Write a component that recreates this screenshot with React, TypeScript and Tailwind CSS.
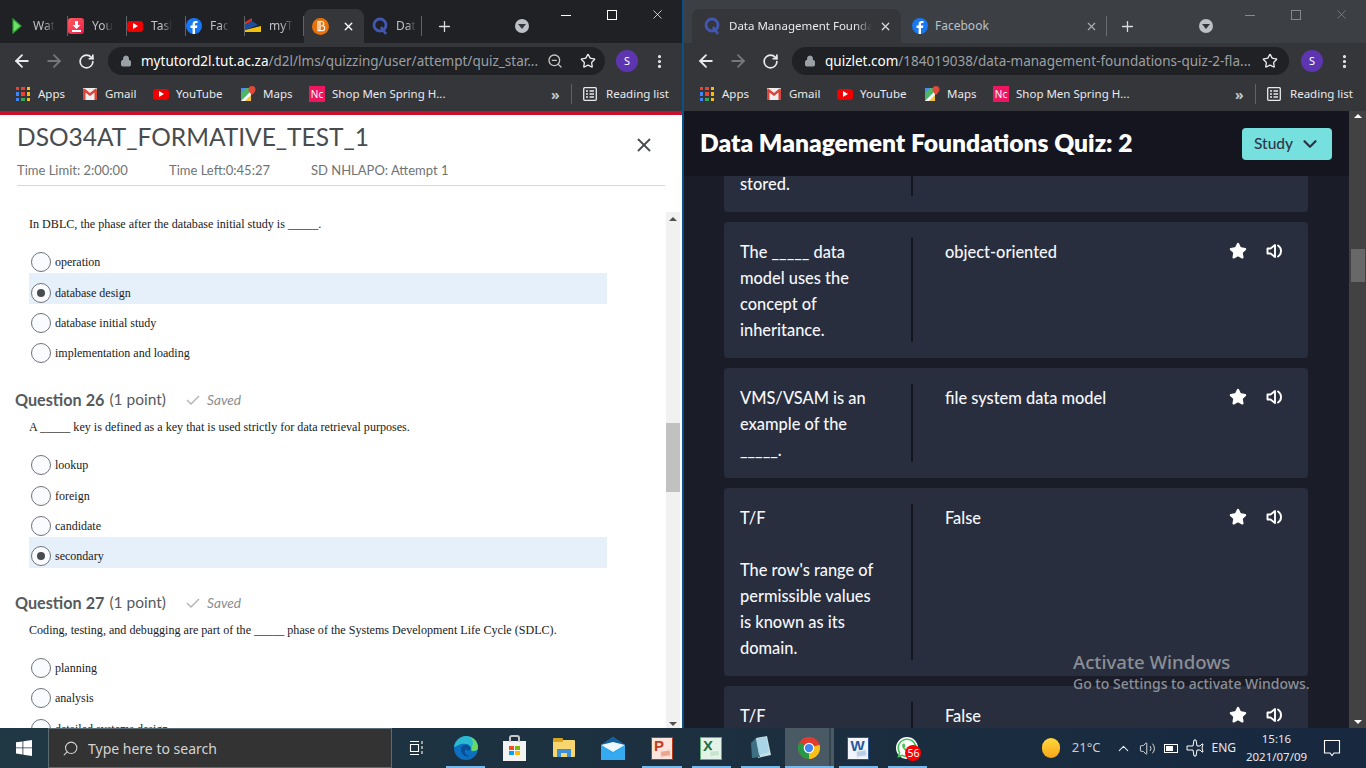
import { ArrowLeft, ArrowRight, ChevronDown, ChevronUp, Lock, MoreVertical, Plus, RotateCw, Search, Star, Volume2, X, ZoomOut } from 'lucide-react'
import { FaWhatsapp } from 'react-icons/fa'
import type { ReactNode } from 'react'

const ui = 'font-["Noto_Sans",sans-serif]'
const lato = 'font-["Lato",sans-serif]'
const fade = '[mask-image:linear-gradient(to_right,black_55%,transparent)]'

function Quizlet() {
  return (
    <svg width="16" height="18" viewBox="0 0 16 18" fill="none" stroke="#4257b2" strokeWidth="2.800">
      <circle cx="8" cy="8" r="6" />
      <path d="M9 10l5 7" />
    </svg>
  )
}

function Fb() {
  return (
    <svg width="16" height="16" viewBox="0 0 16 16">
      <circle cx="8" cy="8" r="8" fill="#1877f2" />
      <path d="M9 16V10h2l.4-2.4H9V6.2c0-.7.3-1.2 1.3-1.2h1.2V3c-.6-.1-1.2-.1-1.8-.1C7.800 2.900 6.600 4 6.600 6v1.600H4.500V10h2.100v6z" fill="#fff" />
    </svg>
  )
}

function Yt() {
  return (
    <span className="flex h-[11px] w-[16px] items-center justify-center rounded-[3px] bg-[#f00000]">
      <span className="h-0 w-0 border-y-[3px] border-l-[5px] border-y-transparent border-l-white" />
    </span>
  )
}

function AppsIcon() {
  const colors = ['#ea4335', '#ea4335', '#fbbc05', '#4285f4', '#ea4335', '#fbbc05', '#4285f4', '#34a853', '#fbbc05']
  return (
    <span className="grid h-[14px] w-[14px] grid-cols-3 gap-[2px]">
      {colors.map((c, i) => <span key={i} style={{ background: c }} />)}
    </span>
  )
}

function GmailIcon() {
  return (
    <svg width="14" height="12" viewBox="0 0 14 12">
      <rect width="14" height="12" rx="1" fill="#eee" />
      <path d="M0 1.500V12h2.500V4.500L7 8l4.500-3.500V12H14V1.500L12.500.5 7 5 1.500.5z" fill="#d9453a" />
    </svg>
  )
}

function MapsIcon() {
  return (
    <svg width="16" height="16" viewBox="0 0 16 16">
      <path d="M1 2h10v13H1z" fill="#4db56a" />
      <path d="M1 15 11 5v10z" fill="#f7f7f7" />
      <path d="M5 15l6-6v6z" fill="#f5c33b" />
      <path d="M1 2h5L1 7z" fill="#4a8af4" />
      <path d="M12 0a3.500 3.500 0 0 0-3.500 3.500C8.500 6 12 9 12 9s3.500-3 3.500-5.500A3.500 3.500 0 0 0 12 0z" fill="#e2493a" />
    </svg>
  )
}

function NcIcon() {
  return <span className={`${ui} flex h-[16px] w-[16px] items-center justify-center bg-[#f01560] text-[10px] leading-none text-white`}>Nc</span>
}

function ReadingIcon() {
  return (
    <svg width="14" height="14" viewBox="0 0 14 14" fill="none" stroke="#e8eaed" strokeWidth="1.300">
      <rect x=".7" y=".7" width="12.600" height="12.600" rx="1" />
      <path d="M3 4h2M3 7h2M3 10h2M6.500 4h4.500M6.500 7h4.500M6.500 10h4.500" />
    </svg>
  )
}

function Bookmark({ icon, label, className }: { icon: ReactNode; label: string; className: string }) {
  return (
    <span className={`flex items-center ${className}`}>
      <span className="flex w-[16px] items-center justify-center">{icon}</span>
      <span className="ml-[7px]">{label}</span>
    </span>
  )
}

function BookmarkBar() {
  return (
    <div className={`${ui} flex h-[32px] items-center bg-[#35363a] pb-[2px] pl-[15px] text-[11.500px] text-[#e8eaed]`}>
      <Bookmark icon={<AppsIcon />} label="Apps" className="w-[67px]" />
      <Bookmark icon={<GmailIcon />} label="Gmail" className="w-[71px]" />
      <Bookmark icon={<Yt />} label="YouTube" className="w-[87px]" />
      <Bookmark icon={<MapsIcon />} label="Maps" className="w-[69px]" />
      <Bookmark icon={<NcIcon />} label="Shop Men Spring H..." className="w-[242px]" />
      <span className="flex h-[20px] w-[20px] items-center text-[14px] font-bold text-[#c4c7c5]">»</span>
      <span className="h-[20px] w-px bg-[#5f6368]" />
      <span className="ml-[11px] flex items-center gap-[9px]"><ReadingIcon />Reading list</span>
    </div>
  )
}

function Toolbar({ host, path, zoom, pad, urlWidth }: { host: string; path: string; zoom?: boolean; pad: string; urlWidth: string }) {
  return (
    <div className="flex h-[36px] items-center bg-[#35363a] pl-[12px] text-[#e8eaed]">
      <ArrowLeft size={20} strokeWidth={2.200} />
      <ArrowRight size={20} strokeWidth={2.200} className="ml-[12px] text-[#75777a]" />
      <RotateCw size={17} strokeWidth={2.400} className="ml-[14px]" />
      <div className="ml-[13px] flex h-[28px] w-[497px] items-center rounded-full bg-[#202124] pl-[12px]">
        <Lock size={12} className="fill-[#9aa0a6] text-[#9aa0a6]" />
        <span className={`${ui} ml-[9px] whitespace-nowrap text-[13.500px] text-[#9aa0a6] ${urlWidth}`}>
          <span className="text-white">{host}</span>{path}
        </span>
        {zoom && <ZoomOut size={16} className="ml-[14px] text-[#c4c7c5]" />}
        <Star size={16} strokeWidth={2} className="ml-[17px]" />
      </div>
      <span className={`${pad} ${ui} flex h-[22px] w-[22px] shrink-0 items-center justify-center rounded-full bg-[#5e35b1] text-[11px] text-white`}>S</span>
      <MoreVertical size={17} strokeWidth={2.500} className="ml-[13px] shrink-0" />
    </div>
  )
}

function ChromeDrop() {
  return (
    <span className="flex h-[14px] w-[14px] items-center justify-center rounded-full bg-[#bdc1c6]">
      <span className="mt-px h-0 w-0 border-x-[4px] border-t-[5px] border-x-transparent border-t-[#35363a]" />
    </span>
  )
}

function WinControls({ className, dim }: { className: string; dim?: boolean }) {
  const tone = dim ? 'text-[#85888c]' : 'text-white'
  return (
    <div className={`flex h-full items-start ${tone} ${className}`}>
      <span className="mt-[15px] h-px w-[10px] bg-current" />
      <span className="ml-[36px] mt-[10px] h-[10px] w-[10px] border border-current" />
      <X size={15} strokeWidth={1.200} className="ml-[33px] mt-[7px]" />
    </div>
  )
}

const leftTabs: { icon: ReactNode; label: string }[] = [
  {
    icon: (
      <svg width="10" height="16" viewBox="0 0 10 16">
        <path d="M1 1l8 7-8 7z" fill="#6fe06a" stroke="#2aa52f" strokeWidth="1.200" />
      </svg>
    ),
    label: 'Wat',
  },
  {
    icon: (
      <span className="flex h-[16px] w-[16px] items-center justify-center rounded-[3px] bg-gradient-to-br from-[#ff5a5f] to-[#e8124c]">
        <svg width="9" height="11" viewBox="0 0 9 11" fill="#fff">
          <path d="M3 0h3v4h2.500L4.500 8 .5 4H3zM0 9h9v2H0z" />
        </svg>
      </span>
    ),
    label: 'You',
  },
  { icon: <Yt />, label: 'Tasl' },
  { icon: <Fb />, label: 'Fac' },
  {
    icon: (
      <svg width="16" height="16" viewBox="0 0 16 16">
        <path d="M0 12 16 8v6H0z" fill="#f4c20d" />
        <path d="M0 4 7 0v3L0 7z" fill="#d93025" />
        <path d="M0 7l7-4 6 4-13 5z" fill="#1a4e9e" />
      </svg>
    ),
    label: 'myT',
  },
]

function LeftTabStrip() {
  return (
    <div className={`${ui} flex h-[43px] items-end bg-[#202124] pl-[9px] text-[12px] text-[#bdc1c6]`}>
      {leftTabs.map((t) => (
        <div key={t.label} className="flex h-[34px] w-[59px] items-center">
          <span className="flex w-[16px] items-center justify-center">{t.icon}</span>
          <span className={`ml-[8px] whitespace-nowrap ${fade}`}>{t.label}</span>
          <span className="ml-auto h-[20px] w-px bg-[#5f6368]" />
        </div>
      ))}
      <div className="flex h-[34px] w-[60px] items-center rounded-t-[8px] bg-[#35363a] pl-[8px]">
        <svg width="17" height="17" viewBox="0 0 17 17" fill="none">
          <circle cx="8.500" cy="8.500" r="8.500" fill="#e8710a" />
          <path d="M6 3.500h3.500a2.200 2.200 0 0 1 1 4.200 2.500 2.500 0 0 1-.7 5H6zM8 3.500v9.500" stroke="#fff" strokeWidth="1.200" />
        </svg>
        <X size={13} strokeWidth={2.500} className="ml-[13px] text-white" />
      </div>
      <div className="flex h-[34px] w-[58px] items-center pl-[8px]">
        <span className="flex w-[16px] justify-center"><Quizlet /></span>
        <span className={`ml-[8px] ${fade}`}>Dat</span>
        <span className="ml-auto h-[20px] w-px bg-[#5f6368]" />
      </div>
      <div className="flex h-[34px] items-center">
        <Plus size={17} strokeWidth={1.800} className="ml-[14px] text-[#dadce0]" />
        <span className="ml-[62px]"><ChromeDrop /></span>
      </div>
      <WinControls className="ml-[32px]" />
    </div>
  )
}

function RightTabStrip() {
  return (
    <div className={`${ui} flex h-[43px] items-end bg-[#3c3f43] pl-[8px] text-[12px] text-[#bdc1c6]`}>
      <div className="flex h-[34px] w-[209px] items-center rounded-t-[8px] bg-[#35363a] pl-[12px] text-[#e8eaed]">
        <span className="flex w-[16px] justify-center"><Quizlet /></span>
        <span className="ml-[9px] w-[143px] whitespace-nowrap text-[11.500px] [mask-image:linear-gradient(to_right,black_88%,transparent)]">Data Management Founda</span>
        <X size={13} strokeWidth={2.200} className="ml-[7px] text-[#dadce0]" />
      </div>
      <div className="flex h-[34px] w-[206px] items-center pl-[11px]">
        <Fb />
        <span className="ml-[7px] w-[150px]">Facebook</span>
        <X size={13} strokeWidth={2} className="text-[#aeb1b5]" />
        <span className="ml-auto h-[20px] w-px bg-[#6a6d71]" />
      </div>
      <div className="flex h-[34px] items-center">
        <Plus size={17} strokeWidth={1.800} className="ml-[12px] text-[#dadce0]" />
        <span className="ml-[63px]"><ChromeDrop /></span>
      </div>
      <WinControls className="ml-[32px]" dim />
    </div>
  )
}

function Option({ label, checked }: { label: string; checked?: boolean }) {
  return (
    <div className={`flex h-[30.400px] w-[578px] items-center pl-[2px] pt-[8px] ${checked ? 'bg-[#e6f0fa]' : ''}`}>
      <span className="flex h-[20px] w-[20px] items-center justify-center rounded-full border border-[#6e7376] bg-[#f9fbff]">
        {checked && <span className="h-[8px] w-[8px] rounded-full bg-[#494c4e]" />}
      </span>
      <span className="ml-[4px] text-[12px] text-[#202122]">{label}</span>
    </div>
  )
}

function QuestionHead({ n }: { n: number }) {
  return (
    <div className={`${lato} mt-[22.400px] -ml-[14px] flex h-[26px] items-center text-[#565a5c]`}>
      <span className="text-[16.200px] font-bold">Question {n}</span>
      <span className="ml-[5px] text-[15.500px]">(1 point)</span>
      <svg width="14" height="10" viewBox="0 0 14 10" fill="none" stroke="#b5b8ba" strokeWidth="1.500" className="ml-[20px]">
        <path d="M1 5l4 4 8-8" />
      </svg>
      <span className="ml-[7px] text-[13.700px] text-[#8a8d8f] italic">Saved</span>
    </div>
  )
}

function Block({ q, children }: { q: string; children: ReactNode }) {
  return (
    <div>
      <p className="mb-[8px] pt-[3px] text-[12.100px] leading-[22px] text-[#202122]">{q}</p>
      {children}
    </div>
  )
}

function QuizPane() {
  return (
    <div className="flex min-h-0 flex-1 flex-col bg-white">
      <div className={`${lato} mx-[17px] h-[71px] border-b border-[#d3d9e3] text-[#565a5c]`}>
        <div className="flex h-[44px] items-center justify-between pr-[10px]">
          <h1 className="text-[24.500px] leading-none text-[#494c4e]">DSO34AT_FORMATIVE_TEST_1</h1>
          <X size={22} strokeWidth={2} className="mt-[16px] text-[#494c4e]" />
        </div>
        <div className="flex text-[13px] leading-[22px] text-[#6e7376]">
          <span className="w-[152px]">Time Limit: 2:00:00</span>
          <span className="w-[142px]">Time Left:0:45:27</span>
          <span>SD NHLAPO: Attempt 1</span>
        </div>
      </div>
      <div className="relative mt-[24px] min-h-0 flex-1 overflow-hidden pl-[29px] font-['Liberation_Serif',serif]">
        <Block q="In DBLC, the phase after the database initial study is _____.">
          <Option label="operation" />
          <Option label="database design" checked />
          <Option label="database initial study" />
          <Option label="implementation and loading" />
        </Block>
        <QuestionHead n={26} />
        <Block q="A _____ key is defined as a key that is used strictly for data retrieval purposes.">
          <Option label="lookup" />
          <Option label="foreign" />
          <Option label="candidate" />
          <Option label="secondary" checked />
        </Block>
        <QuestionHead n={27} />
        <Block q="Coding, testing, and debugging are part of the _____ phase of the Systems Development Life Cycle (SDLC).">
          <Option label="planning" />
          <Option label="analysis" />
          <Option label="detailed systems design" />
        </Block>
        <div className="absolute bottom-0 right-[2px] top-[2px] flex w-[14px] flex-col items-center bg-[#f1f1f1]">
          <span className="mt-[5px] h-0 w-0 border-x-[4px] border-b-[4px] border-x-transparent border-b-[#505050]" />
          <span className="mt-[202px] h-[69px] w-full bg-[#c1c1c1]" />
          <span className="mt-auto mb-[2px] h-0 w-0 border-x-[4px] border-t-[4px] border-x-transparent border-t-[#505050]" />
        </div>
      </div>
    </div>
  )
}

function Speaker() {
  return (
    <svg width="18" height="16" viewBox="0 0 18 16" fill="none" stroke="#fff" strokeWidth="1.900" className="mt-[2px]">
      <path d="M1.500 5.500h3l4.500-3.500v12L4.500 10.500h-3z" strokeLinejoin="round" />
      <path d="M12 2.500a6.500 6.500 0 0 1 0 11" strokeLinecap="round" />
    </svg>
  )
}

function FlashCard({ term, def, height, clip }: { term: string[]; def: string; height: string; clip?: boolean }) {
  return (
    <div className={`flex shrink-0 rounded-[4px] bg-[#282e3e] pl-[16px] pt-[16px] ${height} ${clip ? 'rounded-b-none' : 'pb-[16px]'}`}>
      <div className="w-[173px] border-r-2 border-[#14151f] text-[16.400px] leading-[26px]">
        {term.map((t, i) => <p key={i} className="h-[26px] translate-y-px">{t}</p>)}
      </div>
      <div className="ml-[32px] flex-1 translate-y-px text-[16.400px] leading-[26px]">{def}</div>
      <div className="mr-[24px] flex w-[55px] items-start justify-between pt-[3px]">
        <Star size={18} className="mt-px fill-white text-white" />
        <Speaker />
      </div>
    </div>
  )
}

function FlashPane() {
  return (
    <div className={`${lato} relative flex min-h-0 flex-1 bg-[#1a1d28] font-medium text-[#f6f7fb]`}>
      <div className="flex min-w-0 flex-1 flex-col">
        <div className="z-10 flex h-[65px] shrink-0 items-center justify-between bg-[#14151f] pl-[16px] pr-[17px]">
          <h2 className="text-[24.600px] font-extrabold text-white">Data Management Foundations Quiz: 2</h2>
          <button type="button" className="flex h-[32px] w-[90px] items-center rounded-[4px] bg-[#75e0de] pl-[12px] text-[15.500px] text-[#303545]">
            Study
            <ChevronDown size={22} strokeWidth={2.500} className="ml-[6px]" />
          </button>
        </div>
        <div className="flex min-h-0 flex-1 flex-col gap-[10px] overflow-hidden px-[40px] pr-[41px]">
          <div className="flex h-[36px] shrink-0 rounded-b-[4px] bg-[#282e3e] pl-[16px]">
            <div className="h-[20px] w-[173px] border-r-2 border-[#14151f] text-[16.400px] leading-[16px]">stored.</div>
          </div>
          <FlashCard term={['The _____ data', 'model uses the', 'concept of', 'inheritance.']} def="object-oriented" height="h-[136px]" />
          <FlashCard term={['VMS/VSAM is an', 'example of the', '_____.']} def="file system data model" height="h-[110px]" />
          <FlashCard term={['T/F', '', "The row's range of", 'permissible values', 'is known as its', 'domain.']} def="False" height="h-[188px]" />
          <FlashCard term={['T/F']} def="False" height="h-[60px]" clip />
        </div>
      </div>
      <div className="flex w-[17px] shrink-0 flex-col items-center bg-[#424242]">
        <span className="mt-[3px] h-0 w-0 border-x-[4px] border-b-[4px] border-x-transparent border-b-white" />
        <span className="mt-[131px] h-[33px] w-[14px] bg-[#686868]" />
        <span className="mb-[4px] mt-auto h-0 w-0 border-x-[4px] border-t-[4px] border-x-transparent border-t-white" />
      </div>
      <div className={`${ui} pointer-events-none absolute left-[389px] top-[539px] z-20 text-[#8c8f96]`}>
        <p className="text-[18.600px] leading-[24px]">Activate Windows</p>
        <p className="text-[14px] leading-[20px]">Go to Settings to activate Windows.</p>
      </div>
    </div>
  )
}

function Slot({ children, on, active }: { children?: ReactNode; on?: boolean; active?: boolean }) {
  return (
    <div className={`relative flex h-full w-[49.100px] shrink-0 items-center justify-center ${active ? 'bg-[#4a5a64]' : ''}`}>
      {children}
      {active && <span className="absolute bottom-0 right-[3px] top-0 w-[2px] bg-[#37464f]" />}
      {on && <span className={`absolute bottom-0 h-[2px] bg-[#76b9ed] ${active ? 'left-0 right-0' : 'left-[5px] right-[5px]'}`} />}
    </div>
  )
}

function DocIcon({ letter, color, frame, accent }: { letter: string; color: string; frame: string; accent: string }) {
  return (
    <span className={`relative h-[23px] w-[22px] border ${frame}`}>
      <span className={`absolute left-[2px] top-0 font-['Liberation_Sans',sans-serif] text-[15px] font-bold leading-[16px] ${color}`}>{letter}</span>
      <span className={`absolute bottom-[2px] right-[1px] h-[7px] w-[11px] rotate-[-8deg] border border-white/70 ${accent}`} />
    </span>
  )
}

function Taskbar() {
  return (
    <div className="flex h-[40px] shrink-0 items-center bg-gradient-to-r from-[#203744] via-[#1c3040] to-[#17283f] text-white">
      <div className="flex h-full w-[48px] items-center justify-center">
        <svg width="16" height="16" viewBox="0 0 16 16" fill="#fff">
          <path d="M0 2.300 6.500 1.400V7.500H0zM7.300 1.300 16 0v7.500H7.300zM0 8.300h6.500v6.200L0 13.600zM7.300 8.300H16V16l-8.700-1.200z" />
        </svg>
      </div>
      <div className={`${ui} flex h-full w-[344px] shrink-0 items-center border border-[#5d6b74] bg-[#333333] pl-[13px] text-[14px] text-[#d3d3d3]`}>
        <Search size={17} strokeWidth={1.500} className="-scale-x-100" />
        <span className="ml-[9px]">Type here to search</span>
      </div>
      <Slot>
        <svg width="16" height="16" viewBox="0 0 16 16" fill="none" stroke="#fff" strokeWidth="1.100">
          <path d="M1 1.500h9M1 14.500h9M1.500 4.500h8v7h-8zM13 1v3M13 6v3M13 11v3" />
        </svg>
      </Slot>
      <Slot on>
        <svg width="24" height="24" viewBox="0 0 24 24">
          <circle cx="12" cy="12" r="12" fill="#0c6fc0" />
          <path d="M0 11C1 5 6 0 12 0c7 0 12 5 12 11 0 3-3 5-7 4 1-1 1-3 0-4-2-3-6-4-10-3-3 1-6 3-7 3z" fill="#2bb9cf" />
          <path d="M24 12c0-6-4-10-9-11 4 2 5 6 3 9-1 2-1 5 1 5 3 0 5-1 5-3z" fill="#67d964" />
          <path d="M7 13c0-3 4-5 7-4 2 1 3 3 2 5-1 1-2 1-3 0-1-2-3 0-2 3 1 2 3 3 5 3-5 2-9-2-9-7z" fill="#0a4f95" />
        </svg>
      </Slot>
      <Slot>
        <span className="relative mt-[5px] grid h-[20px] w-[23px] grid-cols-2 content-center justify-center gap-[1px] bg-[#f3f3f3] px-[6px] py-[4px]">
          <span className="absolute -top-[6px] left-[6px] h-[7px] w-[11px] rounded-t-[3px] border-2 border-b-0 border-[#c8c8c8]" />
          <span className="h-[4px] bg-[#f25022]" />
          <span className="h-[4px] bg-[#7fba00]" />
          <span className="h-[4px] bg-[#00a4ef]" />
          <span className="h-[4px] bg-[#ffb900]" />
        </span>
      </Slot>
      <Slot>
        <span className="relative h-[17px] w-[22px] rounded-[1px] bg-[#f6d66f]">
          <span className="absolute -top-[2px] left-0 h-[4px] w-[10px] rounded-t-[1px] bg-[#d9a21f]" />
          <span className="absolute bottom-0 left-[4px] h-[8px] w-[14px] bg-[#3f8fd6]" />
          <span className="absolute bottom-0 left-[8px] h-[4px] w-[6px] bg-[#f6d66f]" />
        </span>
      </Slot>
      <Slot>
        <svg width="24" height="23" viewBox="0 0 24 23">
          <path d="M0 8 12 0l12 8v15H0z" fill="#1e9be6" />
          <path d="M0 8 12 0l12 8-12 5z" fill="#14609f" />
          <path d="M0 8l12 7 12-7-12-3z" fill="#eef8fe" />
          <path d="M0 8l12 8 12-8v15H0z" fill="#35aaf0" />
        </svg>
      </Slot>
      <Slot on><DocIcon letter="P" color="text-[#c43e1c]" frame="border-[#b8391a] bg-[#fbe5dd]" accent="bg-[#f0a58f]" /></Slot>
      <Slot on><DocIcon letter="X" color="text-[#1e7145]" frame="border-[#5fae74] bg-[#e4f3e8]" accent="bg-[#c7e6ce]" /></Slot>
      <Slot on>
        <svg width="22" height="24" viewBox="0 0 22 24">
          <path d="M7 2 18 0l4 19-13 3z" fill="#c5dfe6" />
          <path d="M2 7l5-5 4 19-8 1z" fill="#3e6f82" />
          <path d="M7 3l10-2 3 15-10 3z" fill="#a8d4e6" />
        </svg>
      </Slot>
      <Slot active on>
        <svg width="22" height="22" viewBox="0 0 24 24">
          <circle cx="12" cy="12" r="12" fill="#e33b2e" />
          <path d="M12 12 23.500 8.500A12 12 0 0 1 12 24z" fill="#fbc116" />
          <path d="M12 12 12 24A12 12 0 0 1 1.800 5.700z" fill="#229a46" />
          <circle cx="12" cy="12" r="5.800" fill="#fff" />
          <circle cx="12" cy="12" r="4.500" fill="#4285f4" />
        </svg>
      </Slot>
      <Slot on><DocIcon letter="W" color="text-[#2b579a]" frame="border-[#2b579a] bg-[#f2f6fc]" accent="bg-[#b9cde8]" /></Slot>
      <Slot on>
        <span className="relative flex h-[22px] w-[22px] items-center justify-center rounded-full bg-white">
          <FaWhatsapp size={22} className="text-[#3fc351]" />
          <span className={`${ui} absolute -right-[3px] -bottom-[2px] flex h-[16px] w-[16px] items-center justify-center rounded-full bg-[#f00] text-[10.500px] leading-none text-white`}>56</span>
        </span>
      </Slot>
      <div className={`${ui} ml-auto flex h-full items-center text-[11.500px] text-[#e8e8e8]`}>
        <span className="h-[20px] w-[18px] rounded-full bg-gradient-to-b from-[#ffd83d] to-[#f7a516]" />
        <span className="ml-[12px] text-[13px] text-[#c8ccd0]">21°C</span>
        <ChevronUp size={17} strokeWidth={1.500} className="ml-[15px]" />
        <Volume2 size={17} strokeWidth={1.300} className="ml-[7px]" />
        <span className="relative ml-[8px] flex h-[9px] w-[14px] items-center border border-white pl-[1px]">
          <span className="h-[5px] w-[7px] bg-white" />
        </span>
        <svg width="18" height="18" viewBox="0 0 18 18" fill="none" stroke="#fff" strokeWidth="1" className="ml-[8px]">
          <path d="M1 7h6l1-6h2l1 6h3l2-2h1l-1 4 1 4h-1l-2-2h-3l-1 6H8l-1-6H1z" />
        </svg>
        <span className="ml-[7px] text-[12px]">ENG</span>
        <div className="ml-[9px] w-[63px] text-center leading-[22px]">
          <p className="-mb-[4px]">15:16</p>
          <p>2021/07/09</p>
        </div>
        <svg width="18" height="18" viewBox="0 0 18 18" fill="none" stroke="#fff" strokeWidth="1.100" className="ml-[15px] mr-[25px]">
          <path d="M1.500 1.500h15v12.500H11l-2 2.500L7 14H1.500z" />
        </svg>
      </div>
    </div>
  )
}

export default function App() {
  return (
    <div className="flex h-[768px] w-[1366px] flex-col overflow-hidden bg-[#0a4f86]">
      <div className="flex min-h-0 flex-1 gap-[2px]">
        <div className="flex w-[682px] flex-col">
          <LeftTabStrip />
          <Toolbar host="mytutord2l.tut.ac.za" path="/d2l/lms/quizzing/user/attempt/quiz_star..." zoom pad="ml-[11px]" urlWidth="w-[392px]" />
          <BookmarkBar />
          <div className="h-[4px] shrink-0 bg-[#c8102e]" />
          <QuizPane />
        </div>
        <div className="flex w-[682px] flex-col">
          <RightTabStrip />
          <Toolbar host="quizlet.com" path="/184019038/data-management-foundations-quiz-2-fla..." pad="ml-[12px]" urlWidth="w-[420px]" />
          <BookmarkBar />
          <FlashPane />
        </div>
      </div>
      <Taskbar />
    </div>
  )
}
